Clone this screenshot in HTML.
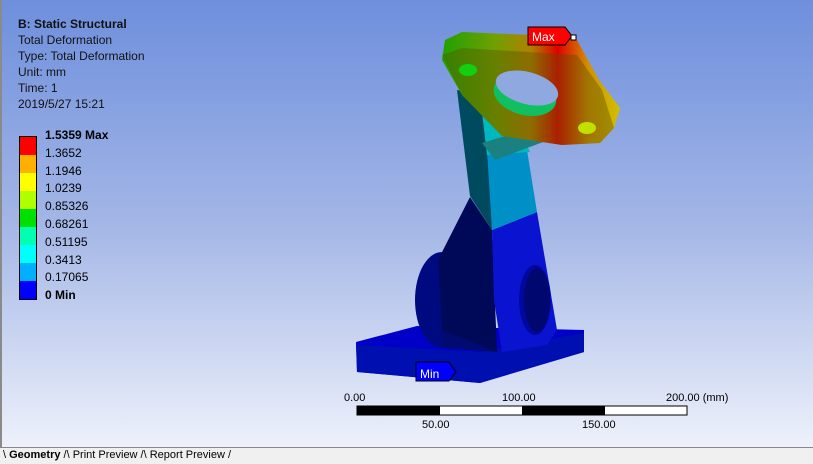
<!DOCTYPE html>
<html><head><style>
body{margin:0;width:813px;height:463px;overflow:hidden;font-family:"Liberation Sans",sans-serif;}
#vp{position:absolute;left:0;top:0;width:813px;height:447px;background:linear-gradient(#6e8fdd 0%,#a3b6e6 50%,#eef1fb 100%);border-left:2px solid #8a8a8a;box-sizing:border-box}
.t{position:absolute;left:16px;font-size:12px;color:#111;line-height:16px}
.lg{position:absolute;left:43px;font-size:12px;color:#000;line-height:17.8px}
#tabs{position:absolute;left:0;top:447px;width:813px;height:16px;background:#f0f0f0;border-top:1px solid #888;font-size:11px}
</style></head><body>
<div id="vp">
<div class="t" style="top:16px"><b>B: Static Structural</b><br>Total Deformation<br>Type: Total Deformation<br>Unit: mm<br>Time: 1<br>2019/5/27 15:21</div>
<div style="position:absolute;left:17px;top:136px;width:16px;height:162px;border:1px solid #000;background:linear-gradient(#f00 0 11.1%,#ffb000 11.1% 22.2%,#ff0 22.2% 33.3%,#b0ff00 33.3% 44.4%,#00e000 44.4% 55.5%,#00ffb0 55.5% 66.6%,#0ff 66.6% 77.7%,#00b0ff 77.7% 88.8%,#0000ff 88.8%)"></div>
<div class="lg" style="top:127px"><b>1.5359 Max</b><br>1.3652<br>1.1946<br>1.0239<br>0.85326<br>0.68261<br>0.51195<br>0.3413<br>0.17065<br><b>0 Min</b></div>
<svg width="813" height="447" style="position:absolute;left:0;top:0">
<defs><linearGradient id="fl" x1="0" x2="1"><stop offset="0" stop-color="#20a000"/><stop offset=".3" stop-color="#70a000"/><stop offset=".5" stop-color="#b08000"/><stop offset=".65" stop-color="#e00000"/><stop offset=".82" stop-color="#d09000"/><stop offset="1" stop-color="#d0c000"/></linearGradient></defs>
<!-- base -->
<polygon points="354,342 415,326 582,330 582,352 478,383 355,372" fill="#0000c8"/>
<polygon points="354,345 478,352 582,333 582,352 478,383 355,372" fill="#0010b0"/>
<!-- left cylinder -->
<ellipse cx="440" cy="300" rx="27" ry="48" fill="#000a80"/>
<polygon points="440,252 490,255 495,352 440,348" fill="#000a70"/>
<!-- dark triangle -->
<polygon points="468,197 490,230 495,352 440,330 436,260" fill="#000858"/>
<!-- right housing -->
<polygon points="490,230 535,212 555,330 545,345 500,352 492,300" fill="#0a14d0"/>
<ellipse cx="533" cy="300" rx="16" ry="35" fill="#0008a0"/>
<ellipse cx="535" cy="300" rx="13" ry="32" fill="#000870"/>
<!-- column -->
<polygon points="455,90 485,95 490,230 468,196" fill="#004a60"/>
<polygon points="485,150 525,150 535,212 490,230" fill="#0090c8"/>
<polygon points="478,95 510,110 528,152 485,155" fill="#00b8c0"/>
<polygon points="493,160 560,135 530,128 480,143" fill="#1a8080"/>
<!-- flange -->
<polygon points="443,40 460,32 530,35 575,40 597,80 618,108 612,128 598,143 560,145 500,136 460,95 440,60" fill="url(#fl)"/>
<polygon points="440,55 460,48 575,55 600,90 612,128 598,143 560,145 500,136 460,95" fill="#5a5000" opacity=".4"/>
<ellipse cx="523" cy="95" rx="32" ry="20" fill="#10c060" transform="rotate(15 523 95)"/>
<ellipse cx="525" cy="88" rx="32" ry="16" fill="#8fa8e0" transform="rotate(15 525 88)"/>
<ellipse cx="466" cy="70" rx="9" ry="6" fill="#10d010"/>
<ellipse cx="585" cy="128" rx="9" ry="6" fill="#c0e000"/>
<!-- labels -->
<polygon points="526,27 563,27 570,36 563,45 526,45" fill="#f00" stroke="#000"/>
<rect x="569" y="35" width="5" height="5" fill="#fff" stroke="#000"/>
<text x="530" y="41" font-size="12" fill="#fff" font-family="Liberation Sans">Max</text>
<polygon points="414,362 447,362 454,372 447,381 414,381" fill="#00f" stroke="#000"/>
<text x="418" y="378" font-size="12" fill="#fff" font-family="Liberation Sans">Min</text>
<!-- scale -->
<rect x="355" y="406" width="330" height="9" fill="#fff" stroke="#000"/>
<rect x="355" y="406" width="83" height="9" fill="#000"/>
<rect x="520" y="406" width="83" height="9" fill="#000"/>
<g font-size="11" font-family="Liberation Sans" fill="#000">
<text x="342" y="401">0.00</text><text x="500" y="401">100.00</text><text x="664" y="401">200.00 (mm)</text>
<text x="420" y="428">50.00</text><text x="580" y="428">150.00</text></g>
</svg>
</div>
<div id="tabs"><span style="position:absolute;left:3px;top:1px">\ <b>Geometry</b> /\ Print Preview /\ Report Preview /</span></div>
</body></html>
